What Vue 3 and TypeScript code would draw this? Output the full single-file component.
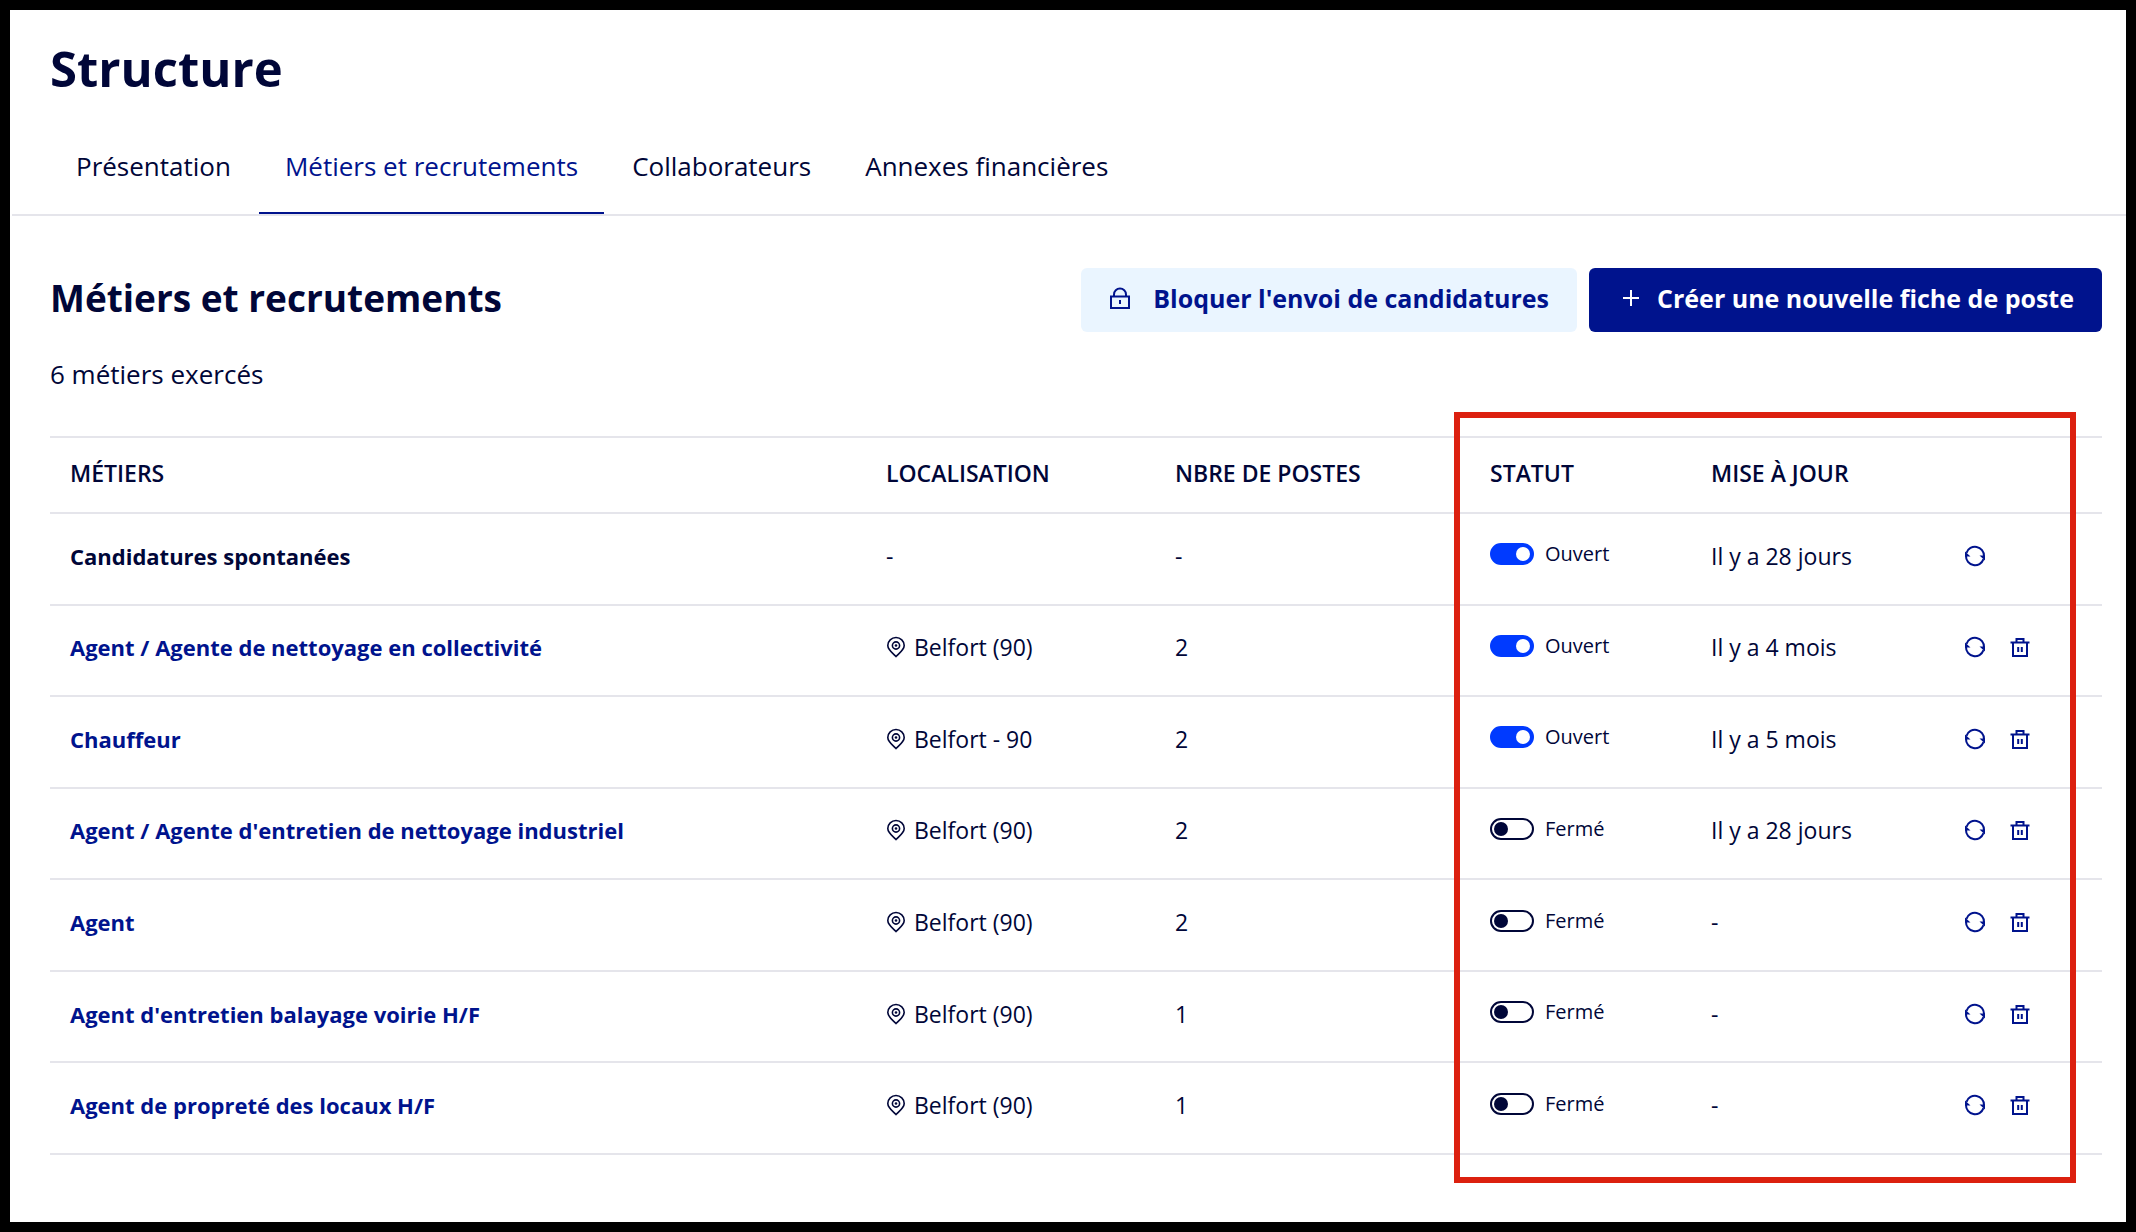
<script setup lang="ts">
import { ref } from 'vue'

interface Tab {
  label: string
  active: boolean
}

interface Job {
  id: number
  title: string
  link: boolean
  place: string | null
  positions: number | null
  open: boolean
  updated: string
}

const tabs: Tab[] = [
  { label: 'Présentation', active: false },
  { label: 'Métiers et recrutements', active: true },
  { label: 'Collaborateurs', active: false },
  { label: 'Annexes financières', active: false },
]

const jobs = ref<Job[]>([
  { id: 1, title: 'Candidatures spontanées', link: false, place: null, positions: null, open: true, updated: 'Il y a 28 jours' },
  { id: 2, title: 'Agent / Agente de nettoyage en collectivité', link: true, place: 'Belfort (90)', positions: 2, open: true, updated: 'Il y a 4 mois' },
  { id: 3, title: 'Chauffeur', link: true, place: 'Belfort - 90', positions: 2, open: true, updated: 'Il y a 5 mois' },
  { id: 4, title: "Agent / Agente d'entretien de nettoyage industriel", link: true, place: 'Belfort (90)', positions: 2, open: false, updated: 'Il y a 28 jours' },
  { id: 5, title: 'Agent', link: true, place: 'Belfort (90)', positions: 2, open: false, updated: '-' },
  { id: 6, title: "Agent d'entretien balayage voirie H/F", link: true, place: 'Belfort (90)', positions: 1, open: false, updated: '-' },
  { id: 7, title: 'Agent de propreté des locaux H/F', link: true, place: 'Belfort (90)', positions: 1, open: false, updated: '-' },
])
</script>

<template>
  <div class="page">
    <h1>Structure</h1>

    <nav class="tabs" aria-label="Structure">
      <a
        v-for="tab in tabs"
        :key="tab.label"
        href="#"
        class="tab"
        :class="{ active: tab.active }"
        :aria-current="tab.active ? 'page' : undefined"
      >{{ tab.label }}</a>
    </nav>

    <main>
      <header class="section-head">
        <h2>Métiers et recrutements</h2>
        <div class="actions">
          <button type="button" class="btn btn-light">
            <svg class="lock" viewBox="0 0 22 22" aria-hidden="true">
              <path d="M2 9.500h18V21H2zM5 9V7.500a6 6 0 0 1 12 0V9M11 13v4" />
            </svg>
            Bloquer l'envoi de candidatures
          </button>
          <button type="button" class="btn btn-primary">
            <svg class="plus" viewBox="0 0 16 16" aria-hidden="true">
              <path d="M8 0v16M0 8h16" />
            </svg>
            Créer une nouvelle fiche de poste
          </button>
        </div>
      </header>

      <p class="count">6 métiers exercés</p>

      <div class="table-wrap">
        <table>
          <colgroup>
            <col />
            <col class="c-place" />
            <col class="c-positions" />
            <col class="c-status" />
            <col class="c-updated" />
            <col class="c-actions" />
          </colgroup>
          <thead>
            <tr>
              <th scope="col">MÉTIERS</th>
              <th scope="col">LOCALISATION</th>
              <th scope="col">NBRE DE POSTES</th>
              <th scope="col">STATUT</th>
              <th scope="col">MISE À JOUR</th>
              <td></td>
            </tr>
          </thead>
          <tbody>
            <tr v-for="job in jobs" :key="job.id">
              <td class="title">
                <a v-if="job.link" href="#">{{ job.title }}</a>
                <template v-else>{{ job.title }}</template>
              </td>
              <td>
                <span v-if="job.place" class="place">
                  <svg class="pin" viewBox="0 0 20 22" aria-hidden="true">
                    <path d="M10 20.500C6.500 17 1.800 13.800 1.800 9.500a8.200 8 0 0 1 16.400 0c0 4.300-4.700 7.500-8.200 11z" />
                    <circle cx="10" cy="9.500" r="3.600" />
                    <circle class="solid" cx="10" cy="9.500" r="1.300" />
                  </svg>
                  {{ job.place }}
                </span>
                <template v-else>-</template>
              </td>
              <td>{{ job.positions ?? '-' }}</td>
              <td class="status">
                <label class="switch">
                  <input v-model="job.open" type="checkbox" role="switch" />
                  {{ job.open ? 'Ouvert' : 'Fermé' }}
                </label>
              </td>
              <td>{{ job.updated }}</td>
              <td>
                <div class="row-actions">
                  <button type="button" aria-label="Actualiser">
                    <svg viewBox="0 0 22 22" aria-hidden="true">
                      <path d="M2.500 7.800A9 9 0 0 1 20 11M19.500 14.200A9 9 0 0 1 2 11" />
                      <path class="solid" d="M15.500 10.500h5.500v5zM6.500 11.500H1v-5z" />
                    </svg>
                  </button>
                  <button v-if="job.link" type="button" aria-label="Supprimer">
                    <svg viewBox="0 0 22 22" aria-hidden="true">
                      <path d="M1.500 6.500h19M4 6.500V20h14V6.500M7.500 6V3h7v3M9.200 11v5M12.800 11v5" />
                    </svg>
                  </button>
                </div>
              </td>
            </tr>
          </tbody>
        </table>
        <div class="highlight" aria-hidden="true"></div>
      </div>
    </main>
  </div>
</template>

<style>
body {
  margin: 0;
  background: #fff;
}
</style>

<style scoped>
.page {
  box-sizing: border-box;
  min-height: 100vh;
  padding: 28px 0 40px;
  border: 10px solid #000;
  background: #fff;
  color: #000638;
  font-family: "Open Sans", "Noto Sans", sans-serif;
  font-size: 23px;
}

h1,
h2,
p {
  margin: 0;
}

h1 {
  padding: 0 40px;
  font-size: 49px;
  line-height: 60px;
  font-weight: 700;
}

.tabs {
  display: flex;
  gap: 2px;
  margin: 24px 0 0 2px;
  padding: 0 38px;
  border-bottom: 2px solid #e5e5eb;
}

.tab {
  padding: 26px 26px 28px;
  border-bottom: 2px solid transparent;
  color: inherit;
  font-size: 26px;
  line-height: 36px;
  text-decoration: none;
}

.tab.active {
  border-color: #00138d;
  color: #00138d;
}

main {
  padding: 52px 24px 0 40px;
}

.section-head,
.actions,
.btn,
.place,
.switch,
.row-actions {
  display: flex;
  align-items: center;
}

.section-head {
  justify-content: space-between;
}

h2 {
  padding-bottom: 4px;
  font-size: 37px;
  line-height: 48px;
  font-weight: 700;
}

.actions {
  gap: 12px;
}

.btn {
  height: 64px;
  padding: 0 28px 4px;
  border: 0;
  border-radius: 6px;
  font: 700 25px/36px "Open Sans", "Noto Sans", sans-serif;
}

.btn-light {
  gap: 22px;
  background: #eaf5ff;
  color: #00138d;
}

.btn-primary {
  gap: 18px;
  padding-left: 34px;
  background: #00138d;
  color: #fff;
}

svg {
  flex: none;
  width: 22px;
  height: 22px;
  fill: none;
  stroke: currentColor;
  stroke-width: 2;
}

.plus {
  width: 16px;
  height: 16px;
}

.solid {
  fill: currentColor;
  stroke: none;
}

.count {
  margin-top: 24px;
  font-size: 26px;
  line-height: 36px;
}

.table-wrap {
  position: relative;
  margin-top: 44px;
}

table {
  width: 100%;
  height: 719px;
  border-top: 2px solid #e5e5eb;
  border-spacing: 0;
  table-layout: fixed;
}

.c-place {
  width: 289px;
}

.c-positions {
  width: 315px;
}

.c-status {
  width: 221px;
}

.c-updated {
  width: 253px;
}

.c-actions {
  width: 158px;
}

th,
td {
  padding: 0 0 6px 20px;
  border-bottom: 2px solid #e5e5eb;
  line-height: 30px;
  text-align: left;
  vertical-align: middle;
}

thead th {
  height: 70px;
  padding-bottom: 4px;
  font-weight: 600;
}

.title {
  font-size: 22px;
  font-weight: 700;
}

.title a {
  color: #00138d;
  text-decoration: none;
}

.place {
  gap: 8px;
}

.pin {
  width: 20px;
  stroke-width: 1.6;
}

.status {
  padding-bottom: 9px;
}

.switch {
  gap: 11px;
  font-size: 20px;
  line-height: 28px;
}

.switch input {
  box-sizing: border-box;
  display: flex;
  width: 44px;
  height: 22px;
  margin: 0;
  padding: 2px;
  border: 2px solid #000638;
  border-radius: 11px;
  appearance: none;
}

.switch input::before {
  width: 14px;
  height: 14px;
  border-radius: 50%;
  background: #000638;
  content: "";
}

.switch input:checked {
  justify-content: flex-end;
  border-color: #003aff;
  background: #003aff;
}

.switch input:checked::before {
  background: #fff;
}

.row-actions {
  gap: 23px;
}

.row-actions button {
  display: flex;
  padding: 0;
  border: 0;
  background: none;
  color: #00138d;
}

.highlight {
  position: absolute;
  top: -24px;
  right: 26px;
  bottom: -28px;
  box-sizing: border-box;
  width: 622px;
  border: 6px solid #dc200f;
  pointer-events: none;
}
</style>
